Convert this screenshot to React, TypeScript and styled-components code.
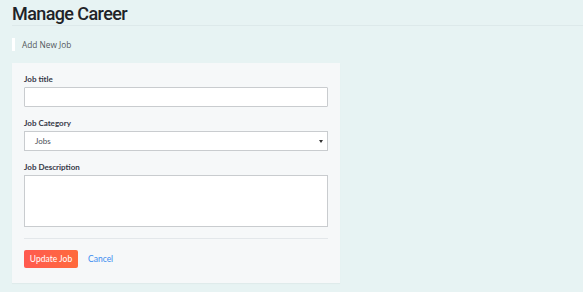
import React from "react";
import styled, { createGlobalStyle } from "styled-components";

const Global = createGlobalStyle`
  html, body { margin: 0; padding: 0; background: #e7f3f3; }
  body { font-family: "Lato", "Open Sans", sans-serif; }
  * { box-sizing: border-box; }
`;

const Page = styled.div`
  padding: 0 0 0 12px;
  width: 583px;
  height: 292px;
  overflow: hidden;
`;

const Header = styled.div`
  border-bottom: 1px solid #dde9ea;
  height: 26px;
  display: flex;
  align-items: flex-start;
`;

const Title = styled.h1`
  margin: 2px 0 0 0;
  font-family: "Roboto", sans-serif;
  font-weight: 500;
  font-size: 18px;
  line-height: 24px;
  color: #1f2328;
  letter-spacing: -0.6px;
`;

const Crumb = styled.div`
  margin-top: 12px;
  height: 13px;
  border-left: 3px solid #ffffff;
  padding-left: 7px;
  font-family: "Open Sans", sans-serif;
  font-size: 8.3px;
  line-height: 13px;
  color: #53585d;
`;

const Card = styled.div`
  margin-top: 12px;
  width: 328px;
  background: #f6f8f9;
  padding: 11px 12px 15px 12px;
  box-shadow: 0 1px 1px rgba(0, 0, 0, 0.03);
`;

const Field = styled.div`
  display: flex;
  flex-direction: column;
  margin-bottom: 11px;
`;

const Label = styled.label`
  font-family: "Lato", sans-serif;
  font-weight: 700;
  font-size: 8px;
  line-height: 10px;
  color: #363848;
  margin-bottom: 3px;
`;

const Input = styled.input`
  height: 20px;
  width: 304px;
  border: 1px solid #c9cccf;
  background: #ffffff;
  border-radius: 1px;
  outline: none;
`;

const SelectBox = styled.div`
  position: relative;
  height: 20px;
  width: 304px;
  border: 1px solid #c9cccf;
  background: #ffffff;
  display: flex;
  align-items: center;
  padding-left: 10px;
  font-family: "Lato", sans-serif;
  font-size: 8px;
  color: #4a4e55;
`;

const Caret = styled.span`
  position: absolute;
  right: 4px;
  top: 8px;
  width: 0;
  height: 0;
  border-left: 2px solid transparent;
  border-right: 2px solid transparent;
  border-top: 3px solid #333;
`;

const TextArea = styled.textarea`
  display: block;
  height: 52px;
  width: 304px;
  border: 1px solid #c9cccf;
  background: #ffffff;
  resize: none;
  outline: none;
`;

const Divider = styled.hr`
  border: none;
  border-top: 1px solid #e3e7ea;
  margin: 2px 0 11px 0;
`;

const Actions = styled.div`
  display: flex;
  align-items: center;
  gap: 10px;
`;

const Primary = styled.button`
  height: 18px;
  width: 54px;
  border: none;
  border-radius: 2px;
  background: linear-gradient(90deg, #ff5a50, #ff6a3c);
  color: #ffffff;
  font-family: "Lato", sans-serif;
  font-size: 8.5px;
  padding: 0;
`;

const Link = styled.a`
  font-family: "Lato", sans-serif;
  font-size: 8.5px;
  color: #3b8cf0;
  text-decoration: none;
`;

export default function App() {
  return (
    <>
      <Global />
      <Page>
        <Header>
          <Title>Manage Career</Title>
        </Header>
        <Crumb>Add New Job</Crumb>
        <Card>
          <Field>
            <Label>Job title</Label>
            <Input />
          </Field>
          <Field>
            <Label>Job Category</Label>
            <SelectBox>
              Jobs
              <Caret />
            </SelectBox>
          </Field>
          <Field>
            <Label>Job Description</Label>
            <TextArea />
          </Field>
          <Divider />
          <Actions>
            <Primary>Update Job</Primary>
            <Link href="#">Cancel</Link>
          </Actions>
        </Card>
      </Page>
    </>
  );
}
